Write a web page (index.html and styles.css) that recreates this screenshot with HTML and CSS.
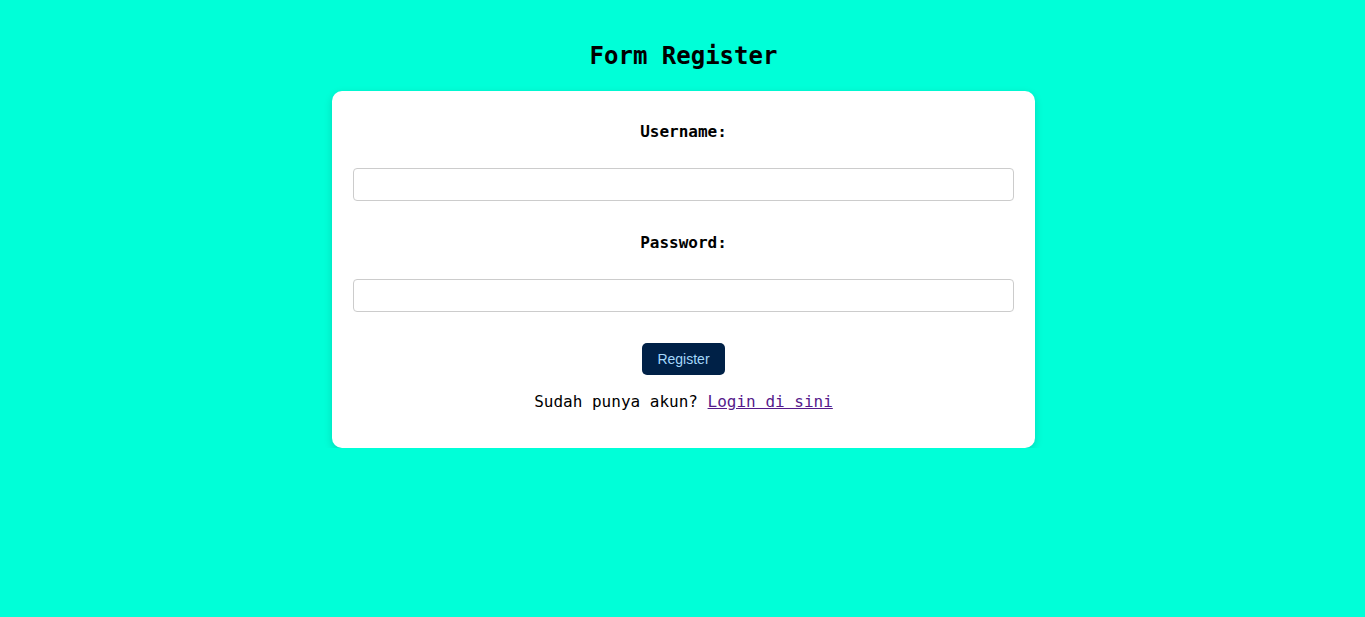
FILE: index.html
```html
<!DOCTYPE html>
<html lang="id">
<head>
<meta charset="utf-8">
<title>Form Register</title>
<link rel="stylesheet" href="styles.css">
</head>
<body>
<h1 class="title">Form Register</h1>
<form class="card">
  <label class="label" for="username">Username:</label>
  <input class="input" type="text" id="username">
  <label class="label label-second" for="password">Password:</label>
  <input class="input" type="password" id="password">
  <button class="btn" type="button">Register</button>
  <p class="note">Sudah punya akun? <a class="link" href="#">Login di sini</a></p>
</form>
</body>
</html>
```
FILE: styles.css
```css
html, body {
  margin: 0;
  padding: 0;
}
body {
  background: #00ffd8;
  font-family: "DejaVu Sans Mono", "Liberation Mono", monospace;
  color: #000;
  display: flex;
  flex-direction: column;
  align-items: center;
  padding-left: 2px;
}
.title {
  font-size: 24px;
  line-height: 28px;
  font-weight: bold;
  margin: 42px 0 21px;
  text-align: center;
}
.card {
  box-sizing: border-box;
  width: 703px;
  background: #fff;
  border-radius: 10px;
  box-shadow: 0 3px 8px rgba(0, 0, 0, 0.15);
  padding: 20px 21px 20px;
  display: flex;
  flex-direction: column;
  align-items: center;
}
.label {
  font-size: 16px;
  line-height: 19px;
  font-weight: bold;
  margin-top: 11px;
  margin-bottom: 27px;
}
.label-second {
  margin-top: 32px;
}
.input {
  box-sizing: border-box;
  width: 100%;
  height: 33px;
  border: 1px solid #ccc;
  border-radius: 4px;
  margin: 0;
  padding: 0 8px;
  background: #fff;
}
.btn {
  margin-top: 31px;
  height: 32px;
  padding: 0 15px;
  background: #002147;
  color: #a4d8fb;
  border: none;
  border-radius: 5px;
  font-family: "Liberation Sans", Arial, sans-serif;
  font-size: 14px;
}
.note {
  font-size: 16px;
  line-height: 19px;
  margin: 17px 0 17px;
}
.link {
  color: #551a8b;
  text-decoration: underline;
}
```
